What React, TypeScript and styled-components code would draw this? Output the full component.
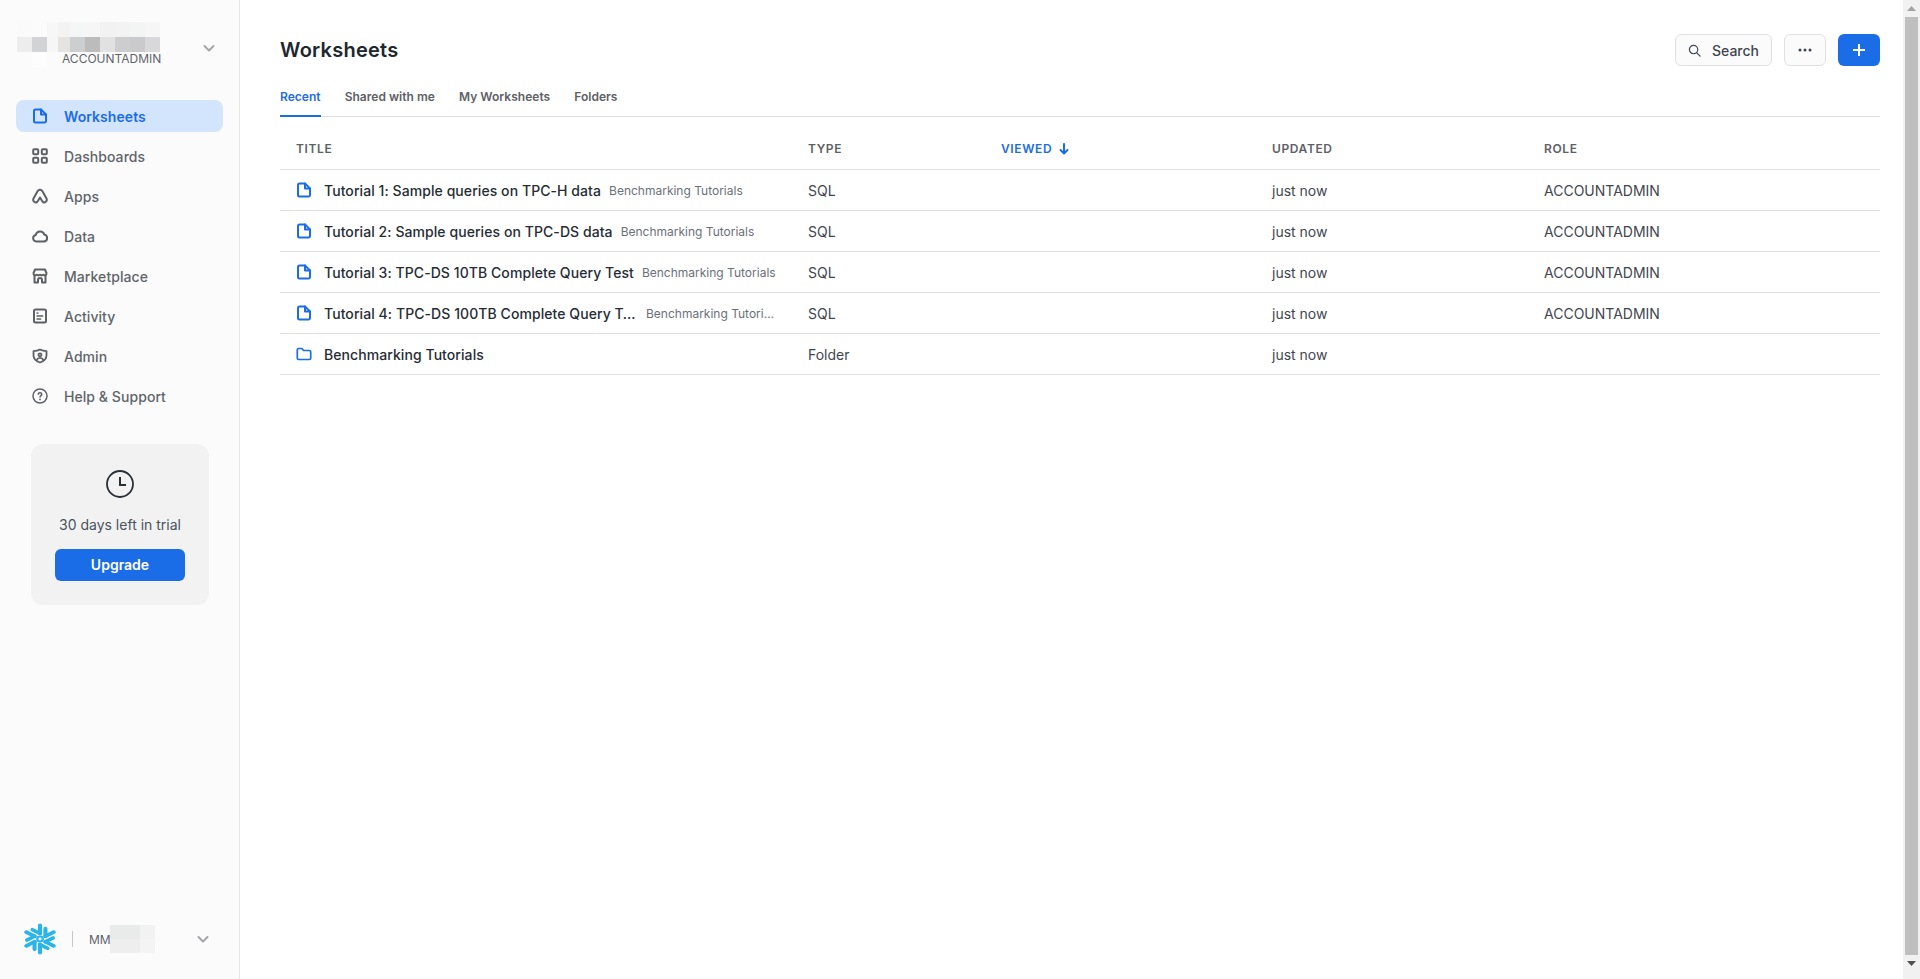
import React from "react";
import styled, { createGlobalStyle } from "styled-components";

const Global = createGlobalStyle`
  html, body { margin: 0; padding: 0; height: 100%; overflow: hidden; background: #fff; }
  #root { height: 100%; }
  * { box-sizing: border-box; }
`;

const Page = styled.div`
  display: flex;
  width: 1920px;
  height: 979px;
  font-family: Inter, "Liberation Sans", sans-serif;
  color: #1e252f;
  overflow: hidden;
`;

const Sidebar = styled.aside`
  width: 240px;
  flex: none;
  display: flex;
  flex-direction: column;
  background: #fbfbfb;
  border-right: 1px solid #e5e5e5;
`;

const AccountHeader = styled.div`
  height: 100px;
  padding: 22px 22px 0 17px;
  display: flex;
  justify-content: space-between;
  align-items: flex-start;
`;

const Mosaic = styled.div`
  position: relative;
  display: grid;
  grid-template-columns: 15px 15px 11px 12px 15px 15px 15px 15px 15px 15px;
  grid-auto-rows: 15px;
`;

const Tile = styled.div<{ $c: string }>`
  background: ${(p) => p.$c};
`;

const RoleLabel = styled.span`
  position: absolute;
  left: 45px;
  top: 29px;
  font-size: 12px;
  line-height: 16px;
  color: #5f646c;
`;

const ChevronBox = styled.div<{ $top?: number }>`
  display: flex;
  margin-top: ${(p) => p.$top ?? 0}px;
  color: #a3a5a9;
`;

const Nav = styled.nav`
  display: flex;
  flex-direction: column;
  gap: 8px;
  padding: 0 16px;
`;

const NavItem = styled.a<{ $active?: boolean }>`
  height: 32px;
  display: flex;
  align-items: center;
  gap: 16px;
  padding-left: 16px;
  border-radius: 8px;
  font-size: 14px;
  letter-spacing: 0.06px;
  font-weight: ${(p) => (p.$active ? 600 : 500)};
  color: ${(p) => (p.$active ? "#1a6ce7" : "#5f646c")};
  background: ${(p) => (p.$active ? "#d3e4fd" : "transparent")};
  svg { flex: none; color: ${(p) => (p.$active ? "#1a6ce7" : "#5d6065")}; }
`;

const TrialCard = styled.div`
  margin: 32px 30px 0 31px;
  height: 161px;
  border-radius: 12px;
  background: #f2f2f2;
  display: flex;
  flex-direction: column;
  align-items: center;
  padding: 26px 24px 0;
`;

const ClockWrap = styled.div`
  display: flex;
  color: #2a3038;
`;

const TrialText = styled.div`
  margin-top: 17px;
  font-size: 14px;
  line-height: 20px;
  color: #4a5260;
`;

const UpgradeButton = styled.button`
  margin-top: 14px;
  width: 130px;
  height: 32px;
  border: 0;
  border-radius: 6px;
  background: #1a6ce7;
  color: #fff;
  font: 600 14px Inter, sans-serif;
  padding: 0 0 2px;
`;

const SideFooter = styled.div`
  margin-top: auto;
  height: 56px;
  margin-bottom: 12px;
  padding: 0 28px 0 24px;
  display: flex;
  align-items: center;
`;

const Divider = styled.div`
  width: 1px;
  height: 16px;
  margin: 0 16px;
  background: #c5c7ca;
`;

const UserName = styled.span`
  font-size: 12px;
  color: #5f646c;
  width: 21px;
`;

const UserMosaic = styled.div`
  display: grid;
  grid-template-columns: 30px 15px;
  grid-auto-rows: 14px;
  margin-right: auto;
`;

const Main = styled.main`
  flex: 1;
  min-width: 0;
  padding: 34px 23px 0 40px;
  background: #fff;
`;

const HeaderRow = styled.header`
  display: flex;
  align-items: center;
  height: 32px;
  gap: 12px;
`;

const Title = styled.h1`
  margin: 0 auto 0 0;
  font-size: 20px;
  line-height: 32px;
  font-weight: 600;
  letter-spacing: 0.25px;
  color: #20262e;
`;

const GhostButton = styled.button<{ $w: number }>`
  width: ${(p) => p.$w}px;
  height: 32px;
  border: 1px solid #e1e1e1;
  border-radius: 6px;
  background: #fbfbfb;
  color: #3f4650;
  display: flex;
  align-items: center;
  justify-content: center;
  gap: 11px;
  font: 500 14px Inter, sans-serif;
  padding: 0;
`;

const PrimaryIconButton = styled.button`
  width: 42px;
  height: 32px;
  border: 0;
  border-radius: 6px;
  background: #1a6ce7;
  color: #fff;
  display: flex;
  align-items: center;
  justify-content: center;
  padding: 0;
`;

const Tabs = styled.div`
  margin-top: 15px;
  height: 36px;
  display: flex;
  gap: 24px;
  border-bottom: 1px solid #e1e1e1;
`;

const Tab = styled.a<{ $active?: boolean }>`
  height: 36px;
  padding-top: 6px;
  font-size: 12px;
  line-height: 20px;
  font-weight: 600;
  letter-spacing: 0.03px;
  color: ${(p) => (p.$active ? "#1a6ce7" : "#5d6065")};
  border-bottom: 2px solid ${(p) => (p.$active ? "#1a6ce7" : "transparent")};
`;

const HeadRow = styled.div`
  display: grid;
  grid-template-columns: 512px 193px 271px 272px 1fr;
  height: 53px;
  align-items: end;
  padding-bottom: 12px;
  border-bottom: 1px solid #e1e1e1;
`;

const HeadCell = styled.div<{ $active?: boolean }>`
  padding-left: 16px;
  display: flex;
  align-items: center;
  gap: 6px;
  font-size: 12px;
  line-height: 16px;
  font-weight: 600;
  letter-spacing: 0.62px;
  color: ${(p) => (p.$active ? "#1a6ce7" : "#5d6065")};
`;

const Row = styled.div`
  display: grid;
  grid-template-columns: 512px 193px 271px 272px 1fr;
  height: 41px;
  align-items: center;
  border-bottom: 1px solid #e1e1e1;
  font-size: 14px;
  color: #3f4650;
`;

const TitleCell = styled.div`
  padding-left: 16px;
  display: flex;
  align-items: center;
  min-width: 0;
  svg { flex: none; color: #1a6ce7; margin-right: 12px; }
`;

const NameGroup = styled.div`
  width: 452px;
  display: flex;
  align-items: center;
  min-width: 0;
`;

const ItemName = styled.span`
  flex: none;
  max-width: 314px;
  overflow: hidden;
  white-space: nowrap;
  text-overflow: ellipsis;
  font-size: 14px;
  font-weight: 500;
  letter-spacing: 0.07px;
  color: #262c35;
`;

const ItemPath = styled.span`
  flex: 0 1 auto;
  min-width: 0;
  margin-left: 8px;
  overflow: hidden;
  white-space: nowrap;
  text-overflow: ellipsis;
  font-size: 12px;
  color: #6b7078;
`;

const Cell = styled.div`
  padding-left: 16px;
`;

const ScrollTrack = styled.div`
  width: 17px;
  flex: none;
  height: 979px;
  background: #f1f1f1;
  display: flex;
  flex-direction: column;
  align-items: center;
`;

const ScrollArrow = styled.div`
  height: 17px;
  display: flex;
  align-items: center;
  justify-content: center;
`;

const ScrollThumb = styled.div`
  width: 13px;
  height: 938px;
  background: #bfbfbf;
`;

const Svg: React.FC<React.PropsWithChildren<{ w?: number }>> = ({ w = 2, children }) => (
  <svg width={16} height={16} viewBox="0 0 16 16" fill="none" stroke="currentColor" strokeWidth={w} strokeLinecap="round" strokeLinejoin="round">
    {children}
  </svg>
);

const DocIcon = () => (
  <Svg>
    <path d="M2 3a1.500 1.500 0 0 1 1.500-1.500h5.500L14 6.500V13a1.500 1.500 0 0 1-1.500 1.500h-9A1.500 1.500 0 0 1 2 13z" />
    <path d="M9 1.500v5h5" />
  </Svg>
);
const GridIcon = () => (
  <Svg>
    <rect x="1.200" y="1.200" width="5" height="5" rx="1" />
    <rect x="9.800" y="1.200" width="5" height="5" rx="1" />
    <rect x="1.200" y="9.800" width="5" height="5" rx="1" />
    <rect x="9.800" y="9.800" width="5" height="5" rx="1" />
  </Svg>
);
const AppsIcon = () => (
  <Svg>
    <path d="M8 9.500 10.300 13.200C11 14.300 12.300 14.800 13.400 14.200 14.800 13.500 15.200 11.800 14.500 10.500L10.600 3.500C10 2.400 9 1.800 8 1.800 7 1.800 6 2.400 5.400 3.500L1.500 10.500C.8 11.800 1.200 13.500 2.600 14.200 3.700 14.800 5 14.300 5.700 13.200L8 9.500" />
  </Svg>
);
const CloudIcon = () => (
  <Svg>
    <path d="M4.300 13.500a3.300 3.300 0 0 1-.6-6.500 4.500 4.500 0 0 1 8.600-.4 3.500 3.500 0 0 1-.2 6.900z" />
  </Svg>
);
const StoreIcon = () => (
  <Svg>
    <path d="M3 1.500h10l1.500 3.700a2 2 0 0 1-3.300 1.600 2.700 2.700 0 0 1-3.200 0 2.700 2.700 0 0 1-3.200 0A2 2 0 0 1 1.500 5.200z" />
    <path d="M2.500 7.500v7h3.500V12a2 2 0 0 1 4 0v2.500h3.500v-7" />
  </Svg>
);
const ActivityIcon = () => (
  <Svg>
    <rect x="2" y="1.500" width="12" height="13" rx="1.500" />
    <path d="M5.200 5h.6M5.200 8h5.300M5.200 11h3.300" strokeWidth="1.700" />
  </Svg>
);
const ShieldIcon = () => (
  <Svg w={1.800}>
    <path d="M8 1.500c2 1.100 4 1.600 6.500 1.700v4c0 3.400-2.500 6-6.500 7.300C4 13.200 1.500 10.600 1.500 7.200v-4C4 3.100 6 2.600 8 1.500z" />
    <circle cx="8" cy="6.800" r="1.500" />
    <path d="M4.800 11.800c.6-1.300 1.800-2 3.200-2s2.600.7 3.200 2" />
  </Svg>
);
const HelpIcon = () => (
  <Svg w={1.500}>
    <circle cx="8" cy="8" r="7" />
    <path d="M6.200 6.200A1.800 1.800 0 0 1 8 4.700c1 0 1.800.7 1.800 1.600 0 1.300-1.800 1.500-1.800 2.800" />
    <path d="M8 11.400h0" strokeWidth="1.800" />
  </Svg>
);
const ChevronIcon = () => (
  <svg width="16" height="16" viewBox="0 0 16 16" fill="none" stroke="currentColor" strokeWidth="2" strokeLinecap="round" strokeLinejoin="round">
    <path d="M3.500 6 8 10.500 12.500 6" />
  </svg>
);
const ClockIcon = () => (
  <svg width="28" height="28" viewBox="0 0 28 28" fill="none" stroke="currentColor" strokeWidth="1.800">
    <circle cx="14" cy="14" r="13" />
    <path d="M14 7v8h6" strokeWidth="2" />
  </svg>
);
const SearchIcon = () => (
  <svg width="13" height="13" viewBox="0 0 14 14" fill="none" stroke="currentColor" strokeWidth="1.300" strokeLinecap="round">
    <circle cx="6" cy="6" r="4.500" />
    <path d="M9.500 9.500 13 13" />
  </svg>
);
const DotsIcon = () => (
  <svg width="14" height="4" viewBox="0 0 14 4" fill="#3f4650">
    <circle cx="2" cy="2" r="1.500" />
    <circle cx="7" cy="2" r="1.500" />
    <circle cx="12" cy="2" r="1.500" />
  </svg>
);
const PlusIcon = () => (
  <svg width="14" height="14" viewBox="0 0 14 14" fill="none" stroke="currentColor" strokeWidth="2">
    <path d="M7 1v12M1 7h12" />
  </svg>
);
const ArrowDownIcon = () => (
  <svg width="12" height="12" viewBox="0 0 12 12" fill="none" stroke="currentColor" strokeWidth="2" strokeLinecap="round" strokeLinejoin="round">
    <path d="M6 1v9.500M2.500 7 6 10.500 9.500 7" />
  </svg>
);
const FolderIcon = () => (
  <Svg w={1.700}>
    <path d="M1.300 3.800A1.300 1.300 0 0 1 2.600 2.500h3.200L7.500 4.500h5.900A1.300 1.300 0 0 1 14.700 5.800v6.400a1.300 1.300 0 0 1-1.300 1.300H2.600a1.300 1.300 0 0 1-1.300-1.300z" />
  </Svg>
);

const SnowflakeLogo = () => (
  <svg width="32" height="32" viewBox="2 0 28 32" preserveAspectRatio="none" fill="none" stroke="#29b5e8" strokeLinecap="round" strokeLinejoin="round" strokeWidth="3.600">
    {[0, 60, 120, 180, 240, 300].map((a) => (
      <g key={a} transform={`rotate(${a} 16 16)`}>
        <path d="M16 10.500V2.200" />
        <path d="M16 10.500 9.400 6.700" />
      </g>
    ))}
    <circle cx="16" cy="16" r="2.400" strokeWidth="2" fill="#fbfbfb" />
  </svg>
);

const mosaicTiles = [
  "#fafafa", "#fbfbfb", "#f7f7f7", "#f3f3f3", "#f5f6f6", "#f6f6f6", "#f2f2f2", "#f3f3f3", "#f3f4f4", "#f6f6f6",
  "#ededed", "#d2d3d4", "#f6f6f6", "#e5e4e2", "#cdcecf", "#bcbcbd", "#e0e1e0", "#cdcdd0", "#cacacc", "#d8d8da",
  "#fbfbfb", "#fdfdfd", "#fbfbfb", "#fbfbfb", "#fbfbfb", "#fbfbfb", "#fbfbfb", "#fbfbfb", "#fbfbfb", "#fbfbfb",
];

const navItems = [
  { label: "Worksheets", icon: <DocIcon />, active: true },
  { label: "Dashboards", icon: <GridIcon /> },
  { label: "Apps", icon: <AppsIcon /> },
  { label: "Data", icon: <CloudIcon /> },
  { label: "Marketplace", icon: <StoreIcon /> },
  { label: "Activity", icon: <ActivityIcon /> },
  { label: "Admin", icon: <ShieldIcon /> },
  { label: "Help & Support", icon: <HelpIcon /> },
];

const rows = [
  { name: "Tutorial 1: Sample queries on TPC-H data", path: "Benchmarking Tutorials", type: "SQL", role: "ACCOUNTADMIN" },
  { name: "Tutorial 2: Sample queries on TPC-DS data", path: "Benchmarking Tutorials", type: "SQL", role: "ACCOUNTADMIN" },
  { name: "Tutorial 3: TPC-DS 10TB Complete Query Test", path: "Benchmarking Tutorials", type: "SQL", role: "ACCOUNTADMIN" },
  { name: "Tutorial 4: TPC-DS 100TB Complete Query Test", path: "Benchmarking Tutorials", type: "SQL", role: "ACCOUNTADMIN" },
  { name: "Benchmarking Tutorials", type: "Folder", folder: true },
];

export default function App() {
  return (
    <Page>
      <Global />
      <Sidebar>
        <AccountHeader>
          <Mosaic>
            {mosaicTiles.map((c, i) => (
              <Tile key={i} $c={c} />
            ))}
            <RoleLabel>ACCOUNTADMIN</RoleLabel>
          </Mosaic>
          <ChevronBox $top={18}>
            <ChevronIcon />
          </ChevronBox>
        </AccountHeader>
        <Nav>
          {navItems.map((n) => (
            <NavItem key={n.label} $active={n.active}>
              {n.icon}
              {n.label}
            </NavItem>
          ))}
        </Nav>
        <TrialCard>
          <ClockWrap>
            <ClockIcon />
          </ClockWrap>
          <TrialText>30 days left in trial</TrialText>
          <UpgradeButton>Upgrade</UpgradeButton>
        </TrialCard>
        <SideFooter>
          <SnowflakeLogo />
          <Divider />
          <UserName>MM</UserName>
          <UserMosaic>
            <Tile $c="#e9eaea" />
            <Tile $c="#f2f2f2" />
            <Tile $c="#eeeeee" />
            <Tile $c="#f4f4f4" />
          </UserMosaic>
          <ChevronBox>
            <ChevronIcon />
          </ChevronBox>
        </SideFooter>
      </Sidebar>
      <Main>
        <HeaderRow>
          <Title>Worksheets</Title>
          <GhostButton $w={97}>
            <SearchIcon />
            Search
          </GhostButton>
          <GhostButton $w={42}>
            <DotsIcon />
          </GhostButton>
          <PrimaryIconButton>
            <PlusIcon />
          </PrimaryIconButton>
        </HeaderRow>
        <Tabs>
          <Tab $active>Recent</Tab>
          <Tab>Shared with me</Tab>
          <Tab>My Worksheets</Tab>
          <Tab>Folders</Tab>
        </Tabs>
        <HeadRow>
          <HeadCell>TITLE</HeadCell>
          <HeadCell>TYPE</HeadCell>
          <HeadCell $active>
            VIEWED
            <ArrowDownIcon />
          </HeadCell>
          <HeadCell>UPDATED</HeadCell>
          <HeadCell>ROLE</HeadCell>
        </HeadRow>
        {rows.map((r) => (
          <Row key={r.name}>
            <TitleCell>
              {r.folder ? <FolderIcon /> : <DocIcon />}
              <NameGroup>
                <ItemName>{r.name}</ItemName>
                {r.path && <ItemPath>{r.path}</ItemPath>}
              </NameGroup>
            </TitleCell>
            <Cell>{r.type}</Cell>
            <Cell />
            <Cell>just now</Cell>
            <Cell>{r.role}</Cell>
          </Row>
        ))}
      </Main>
      <ScrollTrack>
        <ScrollArrow>
          <svg width="9" height="5" viewBox="0 0 9 5" fill="#a3a3a3"><path d="M4.500 0 9 5H0z" /></svg>
        </ScrollArrow>
        <ScrollThumb />
        <ScrollArrow>
          <svg width="9" height="5" viewBox="0 0 9 5" fill="#505050"><path d="M0 0h9L4.500 5z" /></svg>
        </ScrollArrow>
      </ScrollTrack>
    </Page>
  );
}
